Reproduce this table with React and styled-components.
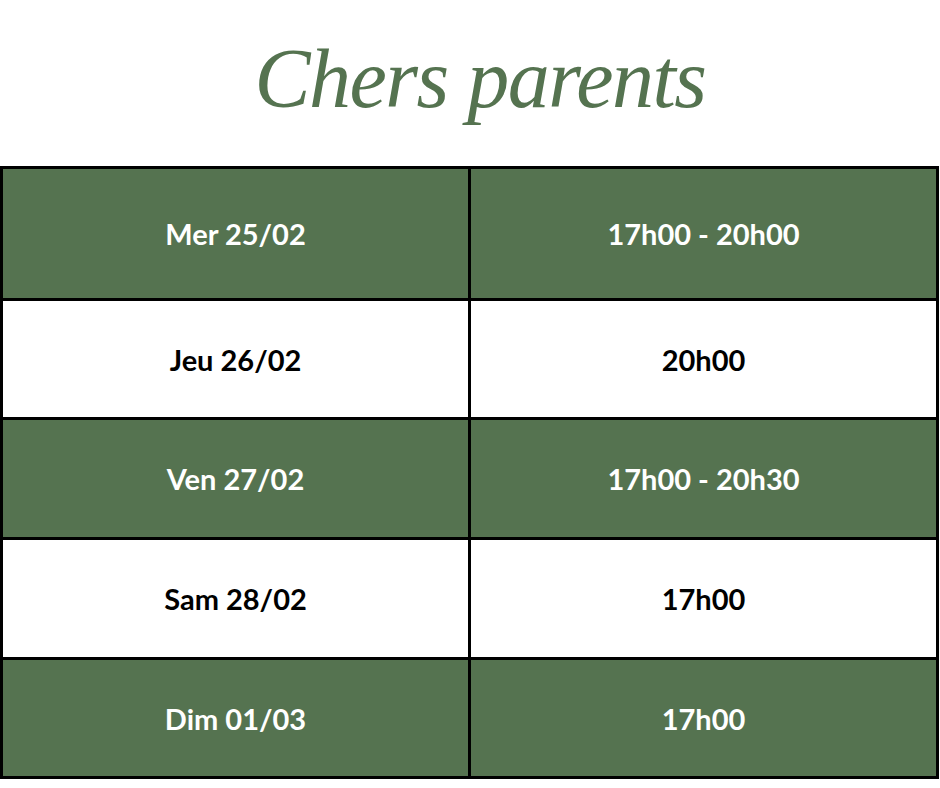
import styled, { createGlobalStyle } from "styled-components";

const GREEN = "#557350";

const rows = [
  { day: "Mer 25/02", hours: "17h00 - 20h00", dark: true, height: 129 },
  { day: "Jeu 26/02", hours: "20h00", dark: false, height: 116 },
  { day: "Ven 27/02", hours: "17h00 - 20h30", dark: true, height: 117 },
  { day: "Sam 28/02", hours: "17h00", dark: false, height: 117 },
  { day: "Dim 01/03", hours: "17h00", dark: true, height: 116 },
];

const App = () => {
  return (
    <>
      <GlobalStyle />
      <Page>
        <Header>
          <Title>Chers parents</Title>
        </Header>
        <Schedule>
          {rows.map((row) => (
            <Row key={row.day} $height={row.height}>
              <Cell $dark={row.dark}>{row.day}</Cell>
              <Cell $dark={row.dark}>{row.hours}</Cell>
            </Row>
          ))}
        </Schedule>
      </Page>
    </>
  );
};

export default App;

const GlobalStyle = createGlobalStyle`
  body {
    margin: 0;
    background: #ffffff;
  }
`;

const Page = styled.div`
  width: 940px;
  height: 788px;
  background: #ffffff;
`;

const Header = styled.header`
  height: 166px;
  display: flex;
  justify-content: center;
  align-items: flex-start;
  padding-left: 20px;
  box-sizing: border-box;
`;

const Title = styled.h1`
  margin: 37px 0 0;
  font-family: "Liberation Serif", serif;
  font-style: italic;
  font-weight: normal;
  font-size: 84px;
  line-height: 1;
  letter-spacing: -1.5px;
  color: ${GREEN};
`;

const Schedule = styled.div`
  width: 939px;
  border-top: 3px solid #000;
  border-left: 3px solid #000;
  box-sizing: border-box;
  display: flex;
  flex-direction: column;
`;

const Row = styled.div`
  display: grid;
  grid-template-columns: 468px 468px;
  height: ${({ $height }) => $height + 3}px;
`;

const Cell = styled.div`
  display: flex;
  align-items: center;
  justify-content: center;
  border-right: 3px solid #000;
  border-bottom: 3px solid #000;
  background: ${({ $dark }) => ($dark ? GREEN : "#ffffff")};
  color: ${({ $dark }) => ($dark ? "#ffffff" : "#000000")};
  font-family: Lato, "Liberation Sans", sans-serif;
  font-weight: 700;
  font-size: 29px;
`;
